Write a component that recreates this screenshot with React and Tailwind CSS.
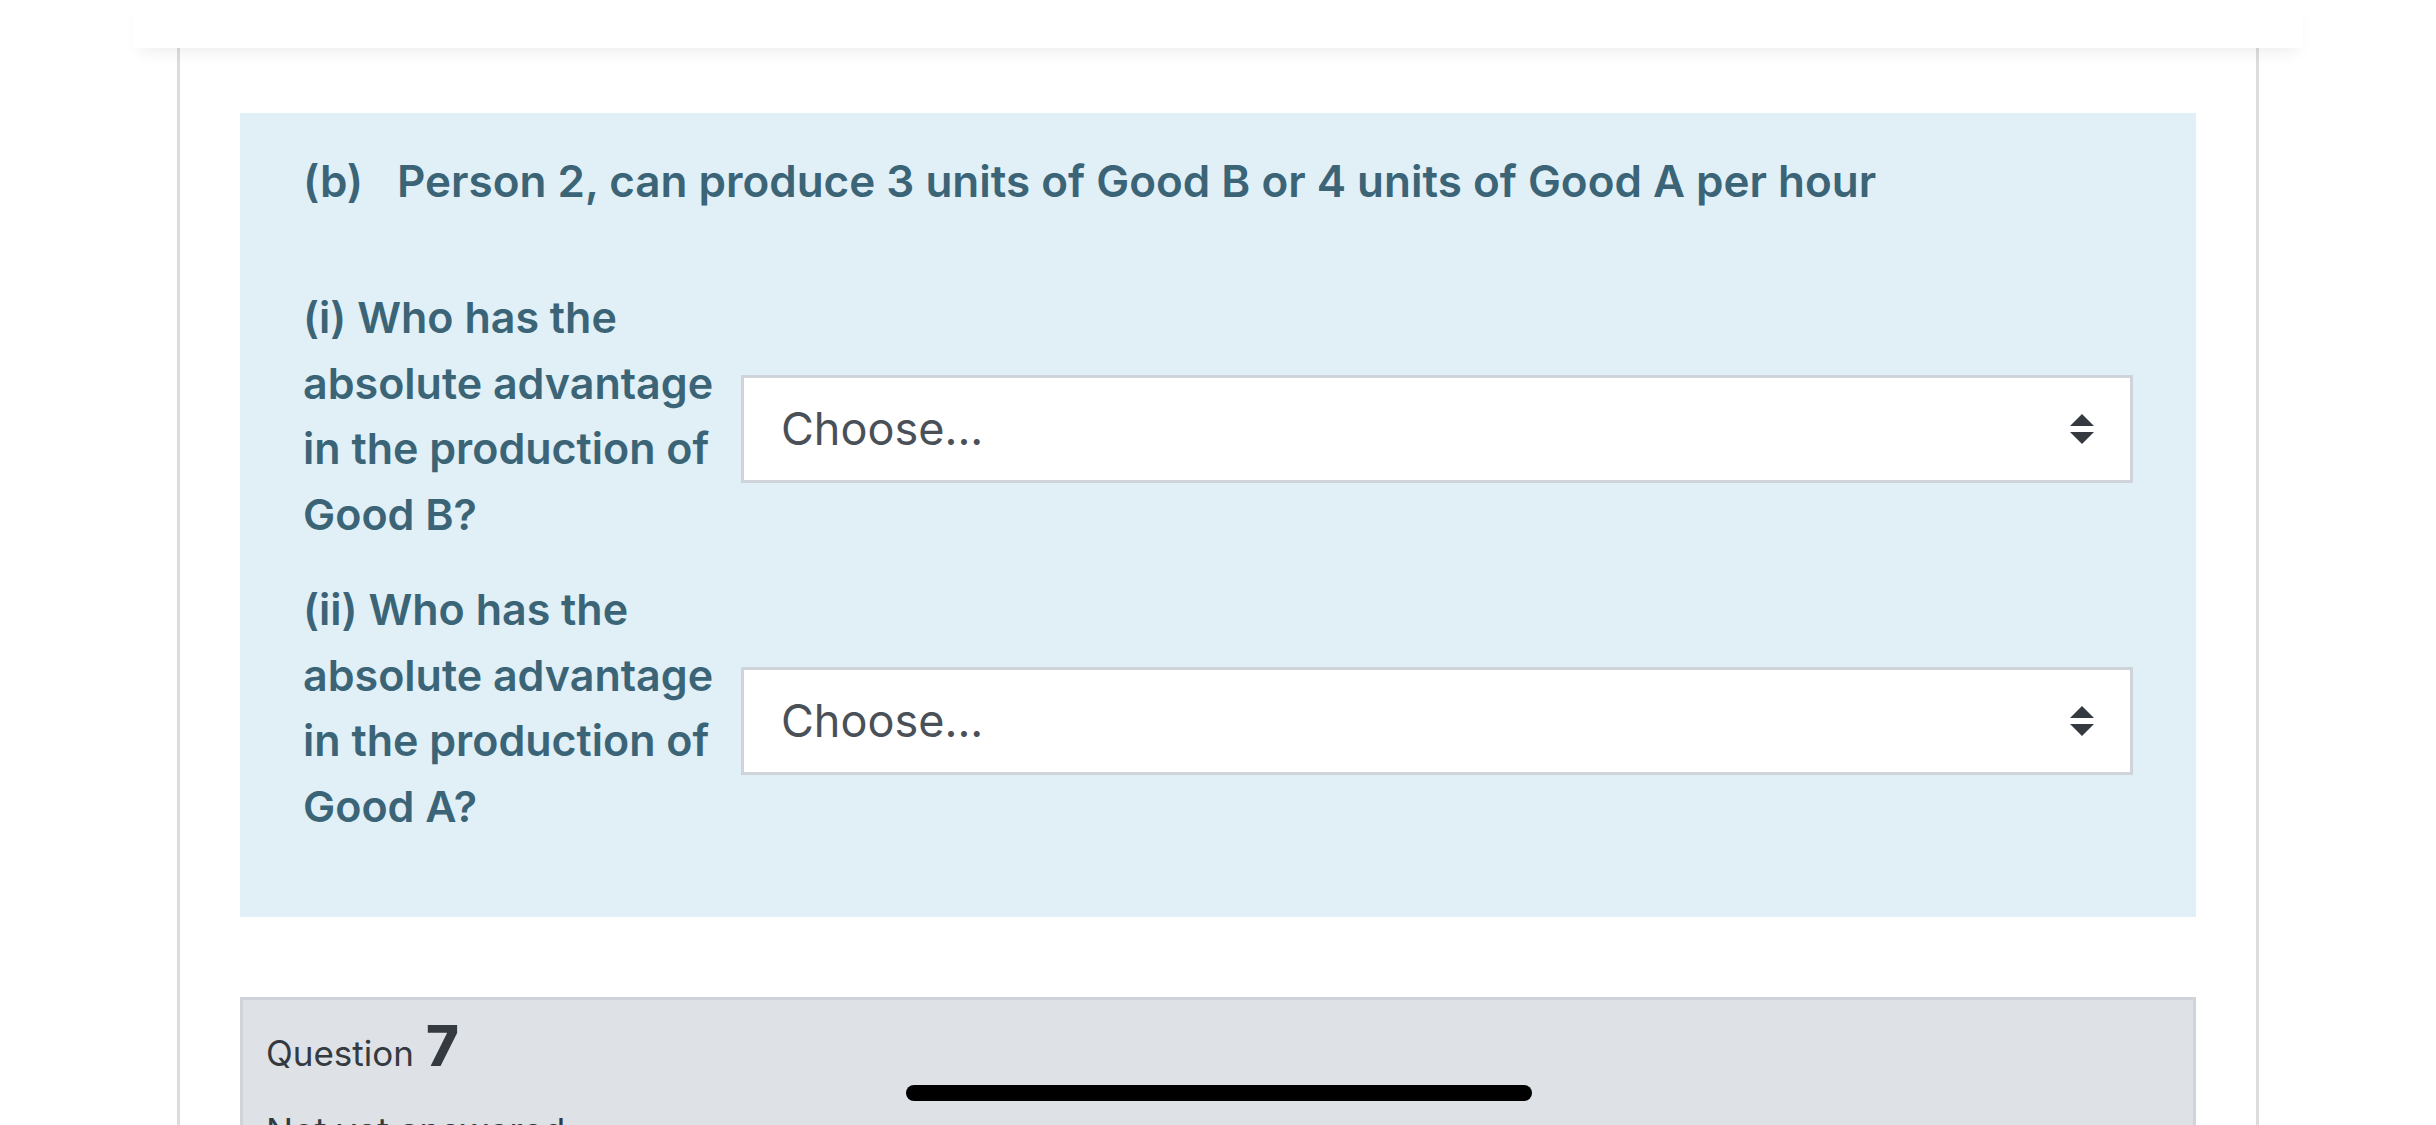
import React from 'react'

function SelectArrows() {
  return (
    <svg width="24" height="30" viewBox="0 0 24 30" className="shrink-0">
      <polygon points="0,12 12,0 24,12" fill="#343a40" />
      <polygon points="0,18 24,18 12,30" fill="#343a40" />
    </svg>
  )
}

function ChooseBox() {
  return (
    <div className="flex-1 mt-[26px] h-[108px] border-[3px] border-[#ced4da] bg-white flex items-center justify-between pl-[37px] pr-[36px]">
      <span className="text-[45px] text-[#495057]">Choose...</span>
      <SelectArrows />
    </div>
  )
}

function MatchRow({ lines }) {
  return (
    <div className="flex items-center gap-[18px]">
      <div className="w-[420px] shrink-0 text-[43px] leading-[65.5px] font-semibold text-[#3b6577] whitespace-nowrap">
        {lines.map((l, i) => (
          <div key={i}>{l}</div>
        ))}
      </div>
      <ChooseBox />
    </div>
  )
}

export default function App() {
  return (
    <div className="relative w-[2436px] h-[1125px] overflow-hidden bg-white font-['Inter','Noto_Sans',sans-serif]">
      {/* top bar */}
      <div className="relative z-10 w-[2170px] h-[48px] mx-auto bg-white shadow-[0_10px_16px_-6px_rgba(0,0,0,0.07)]" />

      {/* page card */}
      <div className="w-[2082px] mx-auto border-x-[3px] border-[#dcdcdc] px-[60px] pt-[65px]">
        <div className="bg-[#e1eff7] px-[63px] pt-[36px] pb-[78px]">
          <div className="text-[44px] leading-[64px] font-semibold text-[#3b6577] whitespace-nowrap">
            <span className="inline-block w-[94px]">(b)</span>
            Person 2, can produce 3 units of Good B or 4 units of Good A per hour
          </div>

          <div className="mt-[72px] flex flex-col gap-[30px]">
            <MatchRow lines={['(i) Who has the', 'absolute advantage', 'in the production of', 'Good B?']} />
            <MatchRow lines={['(ii) Who has the', 'absolute advantage', 'in the production of', 'Good A?']} />
          </div>
        </div>

        <div className="mt-[80px] border-[3px] border-[#ced4da] bg-[#dee2e6] px-[23px] pt-[4px] pb-[40px] text-[#343a40]">
          <div className="flex items-baseline gap-[12px]">
            <span className="text-[35px]">Question</span>
            <span className="text-[56px] font-extrabold">7</span>
          </div>
          <div className="mt-[16px] text-[36px]">Not yet answered</div>
        </div>
      </div>

      {/* home indicator */}
      <div className="absolute left-[906px] top-[1085px] w-[626px] h-[16px] rounded-full bg-black" />
    </div>
  )
}
